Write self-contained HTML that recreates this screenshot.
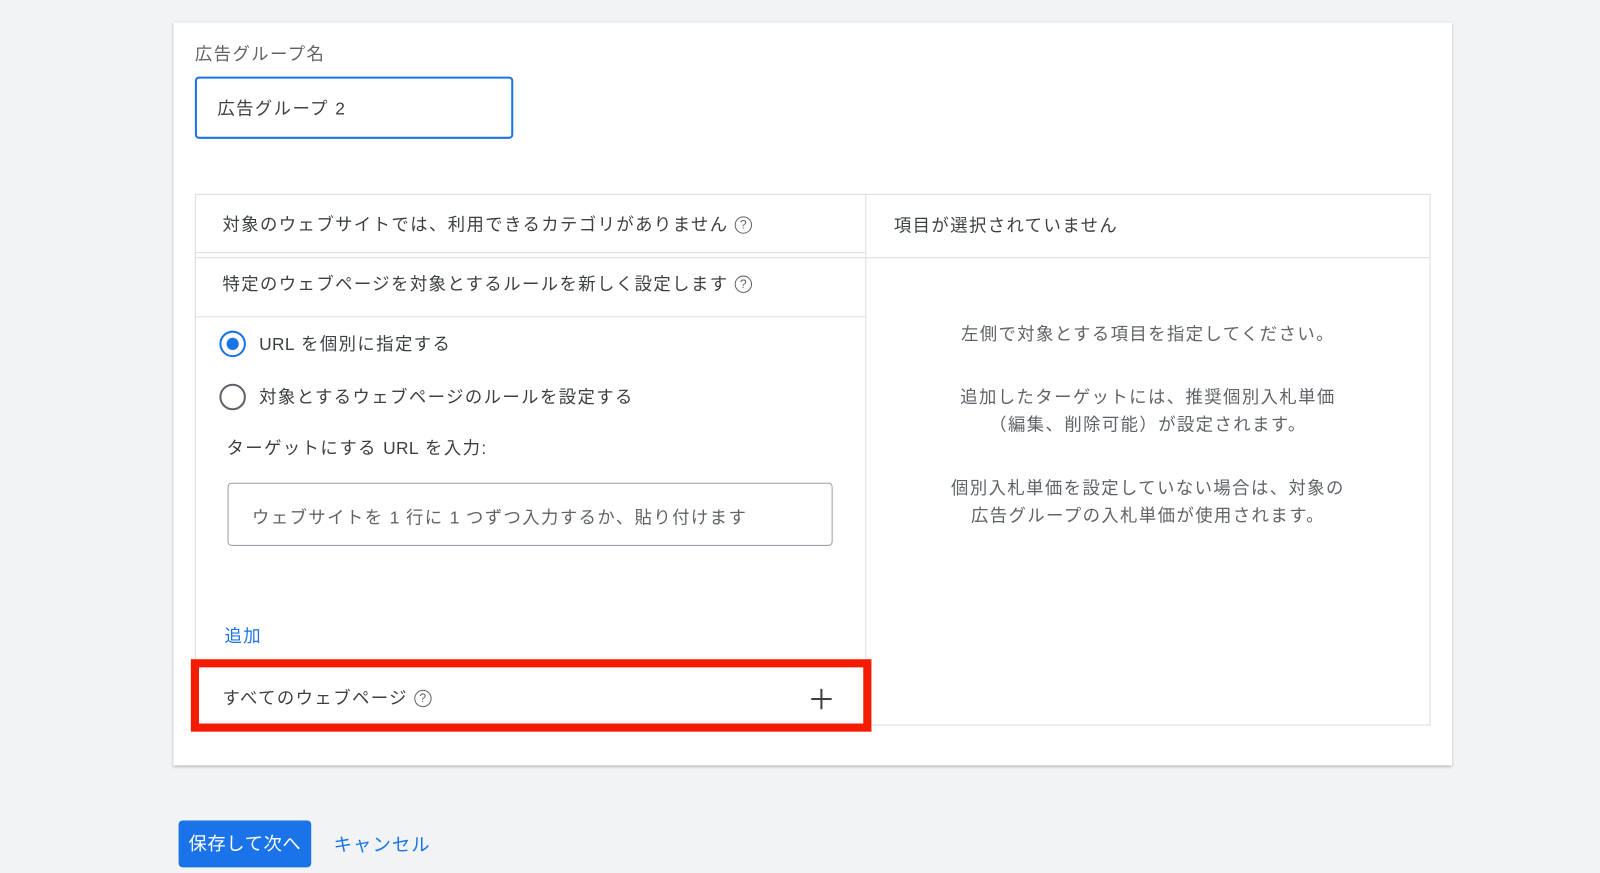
<!DOCTYPE html>
<html><head><meta charset="utf-8"><style>
*{box-sizing:border-box;margin:0;padding:0}
body{width:1600px;height:873px;background:#f1f3f4;font-family:"Liberation Sans","Noto Sans CJK JP",sans-serif;color:#3c4043;overflow:hidden;font-size:17px;letter-spacing:1.4px}
#w{position:absolute;left:0;top:-2px;width:1568px;height:856px;transform:scale(1.0204);transform-origin:0 0}
.abs{position:absolute}
.l{letter-spacing:0.3px}
.card{left:170px;top:24px;width:1253px;height:728px;background:#fff;box-shadow:0 1px 3px rgba(0,0,0,.3)}
.q{display:inline-block;width:17px;height:17px;border:1.5px solid #5f6368;border-radius:50%;font-size:12px;text-align:center;line-height:14px;vertical-align:2px;margin-left:6px;color:#5f6368;letter-spacing:0}
.line{background:#dadce0}
.box{margin-top:2px}
</style></head><body><div id="w">
<div class="abs card"></div>
<div class="abs" style="left:191px;top:41px;color:#5f6368">広告グループ名</div>
<div class="abs" style="left:191px;top:77px;width:312px;height:61px;border:2px solid #1a73e8;border-radius:4px;padding:15px 0 0 20px;color:#3c4043">広告グループ <span class="l">2</span></div>

<div class="abs" style="left:191px;top:192px;width:1211px;height:521px;border:1px solid #dadce0"></div>
<div class="abs line" style="left:848px;top:192px;width:1px;height:521px"></div>
<div class="abs line" style="left:191px;top:249px;width:657px;height:1px"></div>
<div class="abs line" style="left:191px;top:254px;width:1211px;height:1px"></div>
<div class="abs line" style="left:191px;top:312px;width:657px;height:1px"></div>

<div class="abs" style="left:218px;top:208px">対象のウェブサイトでは、利用できるカテゴリがありません<span class="q">?</span></div>
<div class="abs" style="left:218px;top:266px">特定のウェブページを対象とするルールを新しく設定します<span class="q">?</span></div>
<div class="abs" style="left:876px;top:209px">項目が選択されていません</div>

<div class="abs" style="left:215px;top:326px;width:26px;height:26px;border:2px solid #1a73e8;border-radius:50%"><div style="margin:5px;width:12px;height:12px;border-radius:50%;background:#1a73e8"></div></div>
<div class="abs" style="left:254px;top:325px"><span class="l">URL</span> を個別に指定する</div>
<div class="abs" style="left:215px;top:378px;width:26px;height:26px;border:2px solid #5f6368;border-radius:50%"></div>
<div class="abs" style="left:254px;top:377px">対象とするウェブページのルールを設定する</div>
<div class="abs" style="left:222px;top:427px">ターゲットにする <span class="l">URL</span> を入力:</div>
<div class="abs" style="left:223px;top:475px;width:593px;height:62px;border:1px solid #9aa0a6;border-radius:4px;padding:19px 0 0 23px;color:#5f6368">ウェブサイトを <span class="l">1</span> 行に <span class="l">1</span> つずつ入力するか、貼り付けます</div>
<div class="abs" style="left:220px;top:611px;color:#1a73e8">追加</div>

<div class="abs" style="left:848px;top:316px;width:554px;text-align:center;line-height:27px;color:#5f6368">左側で対象とする項目を指定してください。<div style="height:35px"></div>追加したターゲットには、推奨個別入札単価<br>（編集、削除可能）が設定されます。<div style="height:35px"></div>個別入札単価を設定していない場合は、対象の<br>広告グループの入札単価が使用されます。</div>

<div class="abs" style="left:187px;top:648px;width:667px;height:71px;border:8px solid #f41b00;background:#fff"></div>
<div class="abs" style="left:218px;top:672px">すべてのウェブページ<span class="q">?</span></div>
<div class="abs" style="left:795px;top:677px;width:20px;height:20px"><div class="abs" style="left:0;top:9px;width:20px;height:2px;background:#3c4043"></div><div class="abs" style="left:9px;top:0;width:2px;height:20px;background:#3c4043"></div></div>

<div class="abs" style="left:175px;top:806px;width:130px;height:46px;background:#1a73e8;border-radius:4px;color:#fff;text-align:center;line-height:46px;font-size:18px;letter-spacing:0.5px">保存して次へ</div>
<div class="abs" style="left:327px;top:816px;color:#1a73e8;font-size:18px;letter-spacing:1px">キャンセル</div>
</div></body></html>
